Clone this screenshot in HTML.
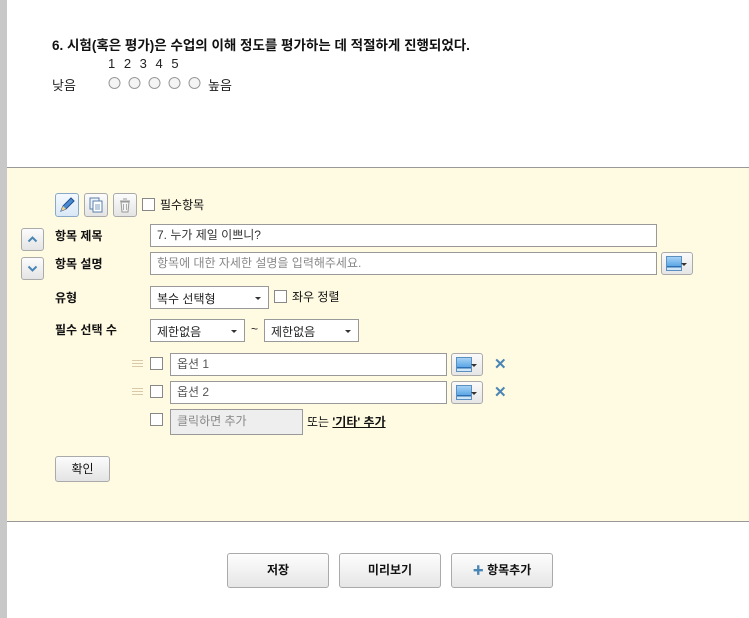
<!DOCTYPE html>
<html><head><meta charset="utf-8"><style>
*{box-sizing:border-box;margin:0;padding:0}
body{width:749px;height:618px;position:relative;background:#fff;font-family:"Liberation Sans","Noto Sans CJK KR",sans-serif;font-size:12px;color:#222;overflow:hidden}
.a{position:absolute}
.lb{font-weight:bold;font-size:12px;color:#111}
.inp{position:absolute;background:#fff;border:1px solid #999;height:23px;padding:3px 6px;font-size:12px;color:#333;line-height:15px}
.ph{color:#888}
.sel{position:absolute;background:#fff;border:1px solid #999;height:23px;padding:3px 6px;font-size:12px;color:#222}
.sel:after{content:"";position:absolute;right:7px;top:10px;border-left:3px solid transparent;border-right:3px solid transparent;border-top:3px solid #333}
.cb{position:absolute;width:13px;height:13px;border:1px solid #888;background:#fff}
.btn{position:absolute;border:1px solid #aaa;border-radius:3px;background:linear-gradient(#fcfcfc,#e4e4e4)}
.cbtn{position:absolute;width:32px;height:23px;border:1px solid #aaa;border-radius:3px;background:linear-gradient(#fafafa,#e6e6e6)}
.cbtn i{position:absolute;left:4px;top:3px;width:16px;height:15px;border:1px solid #5a8fc0;background:linear-gradient(#a8d2f5,#5aa7e6 70%,#2d6fb0 70%,#2d6fb0 80%,#cfe6f7 80%)}
.cbtn b{position:absolute;right:5px;top:10px;border-left:3px solid transparent;border-right:3px solid transparent;border-top:3px solid #333}
.x{position:absolute;color:#4a86b5;font-weight:bold;font-size:15px}
.h{position:absolute;width:11px;height:7px;border-top:1px solid #d9c9a9;border-bottom:1px solid #d9c9a9}
.h:after{content:"";position:absolute;left:0;right:0;top:2px;border-top:1px solid #d9c9a9}
.bb{position:absolute;top:553px;width:102px;height:35px;border:1px solid #aaa;border-radius:3px;background:linear-gradient(#fdfdfd,#e6e6e6);font-weight:bold;text-align:center;line-height:33px;font-size:12px;color:#111}
</style></head><body>
<div class="a" style="left:0;top:0;width:7px;height:618px;background:#c8c8c8"></div>
<div class="a" style="left:52px;top:34px;font-weight:bold;font-size:13.5px;color:#111">6. 시험(혹은 평가)은 수업의 이해 정도를 평가하는 데 적절하게 진행되었다.</div>
<div class="a" style="left:108px;top:56px;font-size:13px;word-spacing:5px">1 2 3 4 5</div>
<div class="a" style="left:52px;top:75px;font-size:13px">낮음</div>
<div class="a" style="left:108px;top:76px;height:14px">
<svg width="100" height="14"><g fill="#f4f4f4" stroke="#999"><circle cx="6.5" cy="7" r="5.5"/><circle cx="26.5" cy="7" r="5.5"/><circle cx="46.5" cy="7" r="5.5"/><circle cx="66.5" cy="7" r="5.5"/><circle cx="86.5" cy="7" r="5.5"/></g></svg></div>
<div class="a" style="left:208px;top:75px;font-size:13px">높음</div>

<div class="a" style="left:7px;top:167px;width:742px;height:355px;background:#fffae2;border-top:1px solid #999;border-bottom:1px solid #999"></div>

<div class="btn" style="left:55px;top:193px;width:24px;height:24px;background:linear-gradient(#f4f9ff,#d9e8f6);border-color:#8aa9c8">
<svg width="22" height="22"><path d="M5 17 L7 12 L15 4 L18 7 L10 15 Z" fill="#4a8ad0" stroke="#1f4f8f"/><path d="M5 17 L7 12 L10 15Z" fill="#f0d090"/></svg></div>
<div class="btn" style="left:84px;top:193px;width:24px;height:24px">
<svg width="22" height="22"><rect x="5" y="4" width="9" height="11" fill="#eef4fb" stroke="#5a7fa8"/><rect x="8" y="7" width="9" height="11" fill="#fff" stroke="#5a7fa8"/><path d="M10 11h5M10 13h5M10 15h5" stroke="#7a9cc0"/></svg></div>
<div class="btn" style="left:113px;top:193px;width:24px;height:24px">
<svg width="22" height="22"><path d="M6 7h10M9 5h4" stroke="#999"/><path d="M7 8h8l-1 10H8Z" fill="#f4f4f4" stroke="#999"/><path d="M9.5 10v6M12.5 10v6" stroke="#aaa"/></svg></div>
<div class="cb" style="left:142px;top:198px"></div>
<div class="a lb" style="left:160px;top:196px;font-weight:normal;color:#111">필수항목</div>

<div class="btn" style="left:21px;top:228px;width:23px;height:23px"><svg width="21" height="21"><path d="M6.5 12.5 10.5 8.5 14.5 12.5" fill="none" stroke="#4a86b5" stroke-width="2"/></svg></div>
<div class="btn" style="left:21px;top:257px;width:23px;height:23px"><svg width="21" height="21"><path d="M6.5 8.5 10.5 12.5 14.5 8.5" fill="none" stroke="#4a86b5" stroke-width="2"/></svg></div>

<div class="a lb" style="left:55px;top:227px">항목 제목</div>
<div class="inp" style="left:150px;top:224px;width:507px">7. 누가 제일 이쁘니?</div>
<div class="a lb" style="left:55px;top:255px">항목 설명</div>
<div class="inp ph" style="left:150px;top:252px;width:507px">항목에 대한 자세한 설명을 입력해주세요.</div>
<div class="cbtn" style="left:661px;top:252px"><i></i><b></b></div>

<div class="a lb" style="left:55px;top:289px">유형</div>
<div class="sel" style="left:150px;top:286px;width:119px">복수 선택형</div>
<div class="cb" style="left:274px;top:290px"></div>
<div class="a lb" style="left:292px;top:288px;font-weight:normal">좌우 정렬</div>

<div class="a lb" style="left:55px;top:321px">필수 선택 수</div>
<div class="sel" style="left:150px;top:319px;width:95px">제한없음</div>
<div class="a" style="left:251px;top:322px">~</div>
<div class="sel" style="left:264px;top:319px;width:95px">제한없음</div>

<div class="h" style="left:132px;top:360px"></div>
<div class="cb" style="left:150px;top:357px"></div>
<div class="inp" style="left:170px;top:353px;width:277px;color:#555">옵션 1</div>
<div class="cbtn" style="left:451px;top:353px"><i></i><b></b></div>
<div class="x" style="left:494px;top:355px">✕</div>

<div class="h" style="left:132px;top:388px"></div>
<div class="cb" style="left:150px;top:385px"></div>
<div class="inp" style="left:170px;top:381px;width:277px;color:#555">옵션 2</div>
<div class="cbtn" style="left:451px;top:381px"><i></i><b></b></div>
<div class="x" style="left:494px;top:383px">✕</div>

<div class="cb" style="left:150px;top:413px"></div>
<div class="inp ph" style="left:170px;top:409px;width:133px;height:26px;background:#eee;padding-top:4px">클릭하면 추가</div>
<div class="a" style="left:307px;top:413px;color:#111">또는 <b style="text-decoration:underline">'기타' 추가</b></div>

<div class="btn" style="left:55px;top:456px;width:55px;height:26px;text-align:center;line-height:24px;color:#111">확인</div>

<div class="bb" style="left:227px">저장</div>
<div class="bb" style="left:339px">미리보기</div>
<div class="bb" style="left:451px"><span style="color:#4a86b5;font-size:11px">✚</span> 항목추가</div>
</body></html>
